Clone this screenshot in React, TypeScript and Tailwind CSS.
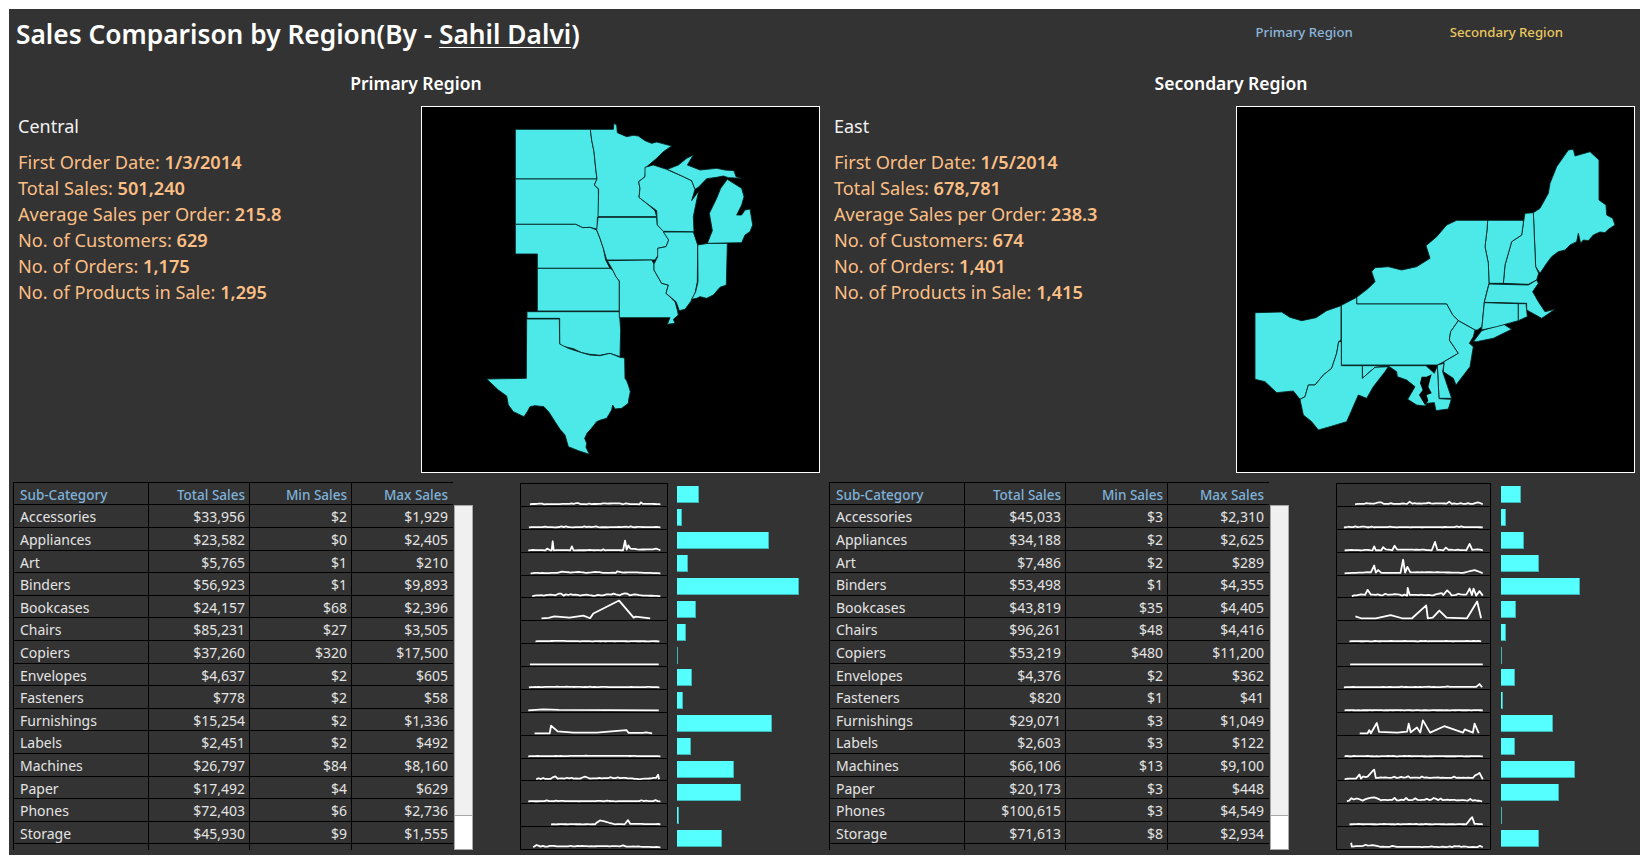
import React from "react";

type Row = { name: string; total: string; min: string; max: string };
type Spark = { p: string; a: number };

const toRows = (s: string): Row[] =>
  s.split("|").map((r) => {
    const [name, total, min, max] = r.split(",,");
    return { name, total, min, max };
  });

const centralRows = toRows(
  "Accessories,,$33,956,,$2,,$1,929|Appliances,,$23,582,,$0,,$2,405|Art,,$5,765,,$1,,$210|Binders,,$56,923,,$1,,$9,893|Bookcases,,$24,157,,$68,,$2,396|Chairs,,$85,231,,$27,,$3,505|Copiers,,$37,260,,$320,,$17,500|Envelopes,,$4,637,,$2,,$605|Fasteners,,$778,,$2,,$58|Furnishings,,$15,254,,$2,,$1,336|Labels,,$2,451,,$2,,$492|Machines,,$26,797,,$84,,$8,160|Paper,,$17,492,,$4,,$629|Phones,,$72,403,,$6,,$2,736|Storage,,$45,930,,$9,,$1,555|Supplies,,$9,467,,$2,,$1,770"
);
const eastRows = toRows(
  "Accessories,,$45,033,,$3,,$2,310|Appliances,,$34,188,,$2,,$2,625|Art,,$7,486,,$2,,$289|Binders,,$53,498,,$1,,$4,355|Bookcases,,$43,819,,$35,,$4,405|Chairs,,$96,261,,$48,,$4,416|Copiers,,$53,219,,$480,,$11,200|Envelopes,,$4,376,,$2,,$362|Fasteners,,$820,,$1,,$41|Furnishings,,$29,071,,$3,,$1,049|Labels,,$2,603,,$3,,$122|Machines,,$66,106,,$13,,$9,100|Paper,,$20,173,,$3,,$448|Phones,,$100,615,,$3,,$4,549|Storage,,$71,613,,$8,,$2,934|Supplies,,$9,640,,$3,,$1,120"
);

const centralSpark: Spark[] = [
  { p: "148,0 185,2 190,0 280,1 320,0 420,3 430,0 480,0 484,6 490,1 543,0", a: 1 },
  { p: "145,0 543,0", a: 1 },
  { p: "143,0 195,0 200,5 210,0 214,0 217,28 220,0 270,0 275,12 280,0 365,0 370,3 375,0 430,0 436,30 441,2 446,15 452,5 480,2 520,3 530,5 543,0", a: 0.4 },
  { p: "150,0 230,1 245,5 270,2 295,4 320,1 345,4 370,1 408,1 412,6 430,2 465,3 500,1 543,0", a: 0.4 },
  { p: "155,0 175,3 190,2 210,5 225,3 235,8 250,2 285,5 300,2 320,5 340,1 370,3 380,6 420,3 435,9 450,3 465,6 490,2 543,0", a: 1.3 },
  { p: "183,0 205,1 222,6 268,2 310,8 330,0 340,15 418,55 462,2 468,5 512,0", a: 0 },
  { p: "165,0 230,1 300,0 540,0", a: 0.3 },
  { p: "148,0 538,0", a: 0 },
  { p: "145,0 210,1 540,0", a: 0.4 },
  { p: "143,0 188,3 235,1 538,0", a: 0 },
  { p: "162,0 208,0 212,24 232,6 280,2 350,2 440,10 447,1 490,1 500,3 518,0", a: 0 },
  { p: "143,0 330,1 430,1 543,0", a: 0.3 },
  { p: "167,0 210,1 225,9 232,2 300,2 315,8 330,2 430,4 480,0 530,4 536,14 539,0", a: 1.2 },
  { p: "143,0 543,0", a: 1.2 },
  { p: "212,0 345,0 360,12 405,0 435,0 445,13 452,1 543,0", a: 0.3 },
  { p: "158,0 168,7 180,2 340,3 420,3 430,6 440,2 543,0", a: 0.8 },
];

const eastSpark: Spark[] = [
  { p: "282,0 340,2 355,6 370,1 440,1 448,8 456,2 560,2 568,8 576,1 640,1 655,6 670,0", a: 1.2 },
  { p: "248,0 670,0", a: 1 },
  { p: "250,0 335,0 340,12 345,0 362,0 367,10 375,3 395,0 402,14 410,2 450,2 515,0 525,26 532,1 550,0 558,8 566,1 620,0 630,20 638,1 655,3 670,0", a: 0.6 },
  { p: "250,0 330,3 340,24 345,2 352,10 362,1 420,1 428,42 434,2 441,20 450,3 540,3 610,1 645,10 670,0", a: 0.3 },
  { p: "272,0 300,6 312,4 320,20 330,5 360,3 410,6 425,2 440,2 442,26 448,4 520,3 545,10 550,4 562,18 575,3 620,5 630,24 637,4 642,24 650,2 660,16 670,2", a: 1.5 },
  { p: "283,6 300,0 345,0 390,10 425,0 455,0 498,40 503,0 518,2 538,24 560,2 622,0 653,52 665,0", a: 0 },
  { p: "265,0 665,0", a: 0.5 },
  { p: "267,0 670,0", a: 0 },
  { p: "248,0 650,1 660,10 668,0", a: 0.6 },
  { p: "250,0 670,0", a: 0.2 },
  { p: "296,0 320,0 325,10 330,0 348,32 355,4 410,2 440,5 445,30 451,3 470,18 480,2 488,40 510,2 553,22 610,2 615,12 640,2 645,30 658,0", a: 0 },
  { p: "250,0 670,0", a: 0.4 },
  { p: "250,0 285,2 295,15 300,2 320,8 340,30 345,4 640,4 660,20 670,0", a: 2 },
  { p: "257,0 290,8 305,2 325,10 340,12 360,3 590,3 668,0", a: 2.5 },
  { p: "265,0 620,0 638,22 645,1 670,0", a: 0.5 },
  { p: "270,14 272,2 340,6 360,1 670,0", a: 1.5 },
];

const centralBars = [21.7, 4.6, 92.3, 11.3, 121.7, 19, 9, 1, 14.7, 5.7, 94.7, 13.7, 57.3, 64.3, 2.3, 45];
const eastBars = [20.3, 4.7, 22.7, 38.3, 79, 14.7, 4.7, 1, 13.7, 2.3, 51.7, 13.7, 74.3, 57.7, 1, 38.3];

const sparkPoints = (s: Spark, seedBase: number) => {
  const pts = s.p.split(" ").map((q) => q.split(",").map(Number));
  const out: string[] = [];
  let seed = seedBase * 97 + 13;
  const rnd = () => {
    seed = (seed * 9301 + 49297) % 233280;
    return seed / 233280;
  };
  pts.forEach((pt, i) => {
    out.push(`${pt[0]},${63 - pt[1]}`);
    const nx = pts[i + 1];
    if (nx && s.a > 0 && nx[0] - pt[0] > 10) {
      for (let x = pt[0] + 7; x < nx[0] - 3; x += 7) {
        const t = (x - pt[0]) / (nx[0] - pt[0]);
        const h = pt[1] + (nx[1] - pt[1]) * t;
        const spike = rnd() > 0.72 ? rnd() * s.a * 3 : rnd() * s.a * 0.6;
        out.push(`${x},${63 - h - spike}`);
      }
    }
  });
  return out.join(" ");
};

const MAP_STROKE = "#06201f";

const centralStates = [
  "256,58 481,58 485,90 492,125 497,175 501,207 256,207",
  "256,207 501,207 493,225 505,237 506,320 502,322 502,358 480,352 458,353 437,343 256,343",
  "256,343 437,343 458,353 480,352 500,360 510,385 520,415 527,450 540,475 322,475 322,432 256,432",
  "322,475 540,475 548,480 558,500 568,513 568,603 322,603",
  "291,605 568,605 572,660 570,740 540,730 510,736 480,733 455,728 430,716 395,708 389,700 389,625 291,625",
  "290,627 388,627 389,702 415,715 455,728 480,735 510,737 540,730 570,742 584,744 585,805 590,812 595,825 601,845 596,870 595,880 575,895 555,897 548,885 545,900 530,925 512,930 500,935 490,948 480,960 472,968 464,985 470,1000 468,1012 478,1033 445,1022 415,1010 405,975 390,958 375,935 358,908 342,890 315,887 300,890 292,905 282,920 250,905 235,885 230,858 205,840 170,807 289,805",
  "481,58 550,58 552,40 560,45 562,68 590,80 610,76 625,78 645,92 665,100 680,96 695,100 725,108 700,125 680,145 648,172 645,200 626,215 630,235 627,262 650,280 675,302 680,320 504,320 506,237 493,225 501,207 497,175 492,125 485,90",
  "504,322 680,322 682,345 700,362 716,390 708,410 683,415 688,430 675,450 530,450 520,415 510,385 500,360",
  "532,452 665,450 672,462 672,480 695,520 715,525 708,550 735,575 742,600 745,615 730,628 735,640 712,643 720,623 568,623 568,513 558,500 548,480",
  "700,366 790,366 803,405 802,515 795,550 782,575 765,598 748,602 738,575 708,550 715,525 695,520 672,480 672,462 683,440 683,415 708,410 716,390",
  "803,405 835,400 892,400 889,525 870,532 850,555 830,565 810,560 800,565 785,568 797,545 804,515",
  "645,172 670,165 710,178 760,200 785,212 795,238 785,272 806,243 796,290 790,320 792,365 700,364 682,345 680,302 650,280 627,262 630,235 626,215 645,200",
  "712,178 745,165 770,145 790,135 772,165 810,180 860,175 885,180 912,182 918,200 935,205 895,203 880,198 860,202 830,206 805,232 795,238 785,212 760,200",
  "892,208 935,235 942,260 935,285 920,315 935,315 945,300 960,297 968,345 960,365 945,375 935,398 832,400 847,362 838,310 860,265 872,235",
];

const eastStates = [
  "880,308 900,295 925,250 930,220 950,170 985,120 1000,118 1005,138 1050,125 1077,150 1077,270 1098,285 1100,315 1118,325 1125,345 1105,358 1095,368 1080,366 1060,375 1045,392 1030,390 1022,400 1015,370 1010,395 990,405 975,420 955,425 935,440 920,460 900,490 887,470",
  "855,310 880,308 887,470 896,490 890,510 865,523 790,520 795,465 815,395 845,375 850,340",
  "743,331 850,331 850,340 845,375 815,395 795,465 790,520 747,520 745,460 735,410 741,360",
  "650,331 743,331 741,360 735,410 745,460 747,520 733,575 726,650 712,660 705,660 655,632 638,615 620,582 350,582 350,562 385,535 405,515 395,485 405,473 445,470 485,480 530,470 570,445 558,407 590,380 620,345",
  "700,695 725,662 790,642 815,658 760,685 710,695",
  "747,522 865,525 890,510 895,520 878,545 895,575 915,605 945,598 920,615 905,625 860,600 860,580 733,577",
  "733,578 835,581 835,632 770,650 725,660",
  "835,581 858,581 862,620 835,632",
  "304,586 350,562 350,582 620,582 638,615 655,632 632,665 628,690 655,730 612,755 592,765 304,765",
  "655,632 705,660 700,680 688,700 700,710 690,770 648,825 640,805 610,785 612,755 655,730 628,690 632,665",
  "592,765 612,760 608,785 635,865 597,865",
  "367,767 558,767 583,790 592,767 597,866 634,868 625,897 588,902 583,878 560,880 555,888 530,885 503,868 525,830 500,810 472,800 470,785 445,768 405,772 367,805",
  "45,608 125,606 150,622 185,632 228,623 260,602 303,587 303,690 296,695 290,730 275,775 250,795 225,825 205,825 195,860 180,868 160,843 110,848 75,815 45,808",
  "180,868 195,860 205,825 225,825 250,795 275,775 290,730 296,695 304,695 304,767 367,767 367,805 405,772 445,770 435,785 400,830 380,865 355,855 320,935 270,950 235,960 215,935 190,915",
];
const eastWater = ["575,793 560,800 545,800 540,820 548,840 537,855 555,885 565,872 560,855 575,850 565,830 570,810"];

function StateMap({ states, water, minX }: { states: string[]; water?: string[]; minX: number }) {
  return (
    <svg viewBox={`${minX} -9 1191 1095`} className="block w-full h-full">
      {states.map((s, i) => (
        <polygon key={i} points={s} fill="#4de8e8" stroke={MAP_STROKE} strokeWidth={2.6} strokeLinejoin="round" />
      ))}
      {water?.map((s, i) => (
        <polygon key={i} points={s} fill="#000000" />
      ))}
    </svg>
  );
}

function Info({ name, stats, width }: { name: string; stats: [string, string][]; width: string }) {
  return (
    <div className={`${width} shrink-0 pl-[9px] pt-[8px]`}>
      <div className="text-[18px] leading-[24px] text-[#f2f2f2] mb-[11px]">{name}</div>
      {stats.map(([k, v]) => (
        <div key={k} className="text-[18.2px] leading-[26.1px] text-[#fbbf85]">
          {k}: <span className="font-semibold">{v}</span>
        </div>
      ))}
    </div>
  );
}

function DataTable({ rows }: { rows: Row[] }) {
  const cols = "grid grid-cols-[135px_101px_102px_102px]";
  return (
    <div className="w-[440px] h-[368px] overflow-hidden border-l border-black shrink-0 text-[14px]">
      <div className={`${cols} h-[23.4px] border-y border-black text-[#7fb2d9] text-[13.5px] font-medium`}>
        <div className="pl-[6px] pt-[2px] h-full flex items-center border-r border-black">Sub-Category</div>
        <div className="justify-end pr-[4px] pt-[2px] h-full flex items-center border-r border-black">Total Sales</div>
        <div className="justify-end pr-[4px] pt-[2px] h-full flex items-center border-r border-black">Min Sales</div>
        <div className="justify-end pr-[5px] pt-[2px] h-full flex items-center border-r border-black">Max Sales</div>
      </div>
      {rows.map((r) => (
        <div key={r.name} className={`${cols} h-[22.6px] border-b border-black text-[#e4e4e4]`}>
          <div className="pl-[6px] pt-[1px] h-full flex items-center border-r border-black">{r.name}</div>
          <div className="justify-end pr-[4px] pt-[1px] h-full flex items-center border-r border-black">{r.total}</div>
          <div className="justify-end pr-[4px] pt-[1px] h-full flex items-center border-r border-black">{r.min}</div>
          <div className="justify-end pr-[5px] pt-[1px] h-full flex items-center border-r border-black">{r.max}</div>
        </div>
      ))}
    </div>
  );
}

function Scrollbar() {
  return (
    <div className="ml-[1px] mt-[23px] w-[19px] h-[345px] shrink-0 border border-[#a8a8a8] flex flex-col">
      <div className="flex-1 bg-[#f0f0f0]" />
      <div className="h-[34px] bg-white border-t border-[#a8a8a8]" />
    </div>
  );
}

function Sparks({ data, minX, zoomWidth, width, seed }: { data: Spark[]; minX: number; zoomWidth: number; width: string; seed: number }) {
  return (
    <div className={`ml-[47px] mt-[1px] ${width} h-[367px] border border-black shrink-0 flex flex-col`}>
      {data.map((s, i) => (
        <div key={i} className="flex-1 min-h-0 border-b border-black last:border-b-0">
          <svg viewBox={`${minX} 0 ${zoomWidth} 68`} preserveAspectRatio="none" className="block w-full h-full">
            <polyline points={sparkPoints(s, seed + i)} fill="none" stroke="#ffffff" strokeWidth={5.5} strokeLinejoin="round" />
          </svg>
        </div>
      ))}
    </div>
  );
}

function Bars({ data, ml }: { data: number[]; ml: string }) {
  return (
    <div className={`${ml} mt-[1px] h-[367px] flex-1 flex flex-col`}>
      {data.map((w, i) => (
        <div key={i} className="flex-1 min-h-0 flex items-center">
          <div className="h-[17px] bg-[#55ffff] border-r border-b border-[#3fb6b6]" style={{ width: w }} />
        </div>
      ))}
    </div>
  );
}

function Region(props: {
  title: string;
  name: string;
  stats: [string, string][];
  rows: Row[];
  states: string[];
  water?: string[];
  mapMinX: number;
  infoW: string;
  spark: Spark[];
  sparkMinX: number;
  sparkZoomW: number;
  sparkW: string;
  bars: number[];
  barsMl: string;
  seed: number;
  titleTweak: string;
}) {
  return (
    <div className="w-[816px] shrink-0 flex flex-col">
      <div className={`h-[47px] flex items-center justify-center pt-[2px] text-[17.5px] font-semibold text-white ${props.titleTweak}`}>{props.title}</div>
      <div className="flex">
        <Info name={props.name} stats={props.stats} width={props.infoW} />
        <div className="w-[399px] h-[367px] border border-white bg-black shrink-0">
          <StateMap states={props.states} water={props.water} minX={props.mapMinX} />
        </div>
      </div>
      <div className="flex mt-[9px] pl-[4px]">
        <DataTable rows={props.rows} />
        <Scrollbar />
        <Sparks data={props.spark} minX={props.sparkMinX} zoomWidth={props.sparkZoomW} width={props.sparkW} seed={props.seed} />
        <Bars data={props.bars} ml={props.barsMl} />
      </div>
    </div>
  );
}

export default function App() {
  return (
    <div className="w-[1648px] h-[863px] bg-white pt-[9px] pl-[9px] overflow-hidden font-['Noto_Sans','Open_Sans',sans-serif]">
      <div className="w-[1631px] h-[846px] bg-[#333333] overflow-hidden">
        <div className="h-[50px] flex items-center">
          <div className="pl-[7px] text-[26.3px] font-semibold text-white leading-none">
            Sales Comparison by Region(By - <span className="underline underline-offset-[3px] decoration-1">Sahil Dalvi</span>)
          </div>
          <div className="ml-auto flex gap-[97px] pr-[77px] text-[13.2px] font-medium -mt-[3px]">
            <span className="text-[#8cb6da]">Primary Region</span>
            <span className="text-[#e9c85f]">Secondary Region</span>
          </div>
        </div>
        <div className="flex">
          <Region
            title="Primary Region"
            name="Central"
            stats={[
              ["First Order Date", "1/3/2014"],
              ["Total Sales", "501,240"],
              ["Average Sales per Order", "215.8"],
              ["No. of Customers", "629"],
              ["No. of Orders", "1,175"],
              ["No. of Products in Sale", "1,295"],
            ]}
            rows={centralRows}
            states={centralStates}
            mapMinX={-24}
            infoW="w-[412px]"
            spark={centralSpark}
            sparkMinX={121}
            sparkZoomW={442}
            sparkW="w-[148px]"
            bars={centralBars}
            barsMl="ml-[9px]"
            seed={3}
            titleTweak="pr-[2px]"
          />
          <Region
            title="Secondary Region"
            name="East"
            stats={[
              ["First Order Date", "1/5/2014"],
              ["Total Sales", "678,781"],
              ["Average Sales per Order", "238.3"],
              ["No. of Customers", "674"],
              ["No. of Orders", "1,401"],
              ["No. of Products in Sale", "1,415"],
            ]}
            rows={eastRows}
            states={eastStates}
            water={eastWater}
            mapMinX={-9}
            infoW="w-[411px]"
            spark={eastSpark}
            sparkMinX={227}
            sparkZoomW={465}
            sparkW="w-[155px]"
            bars={eastBars}
            barsMl="ml-[10px]"
            seed={41}
            titleTweak="pr-[4px]"
          />
        </div>
      </div>
    </div>
  );
}
